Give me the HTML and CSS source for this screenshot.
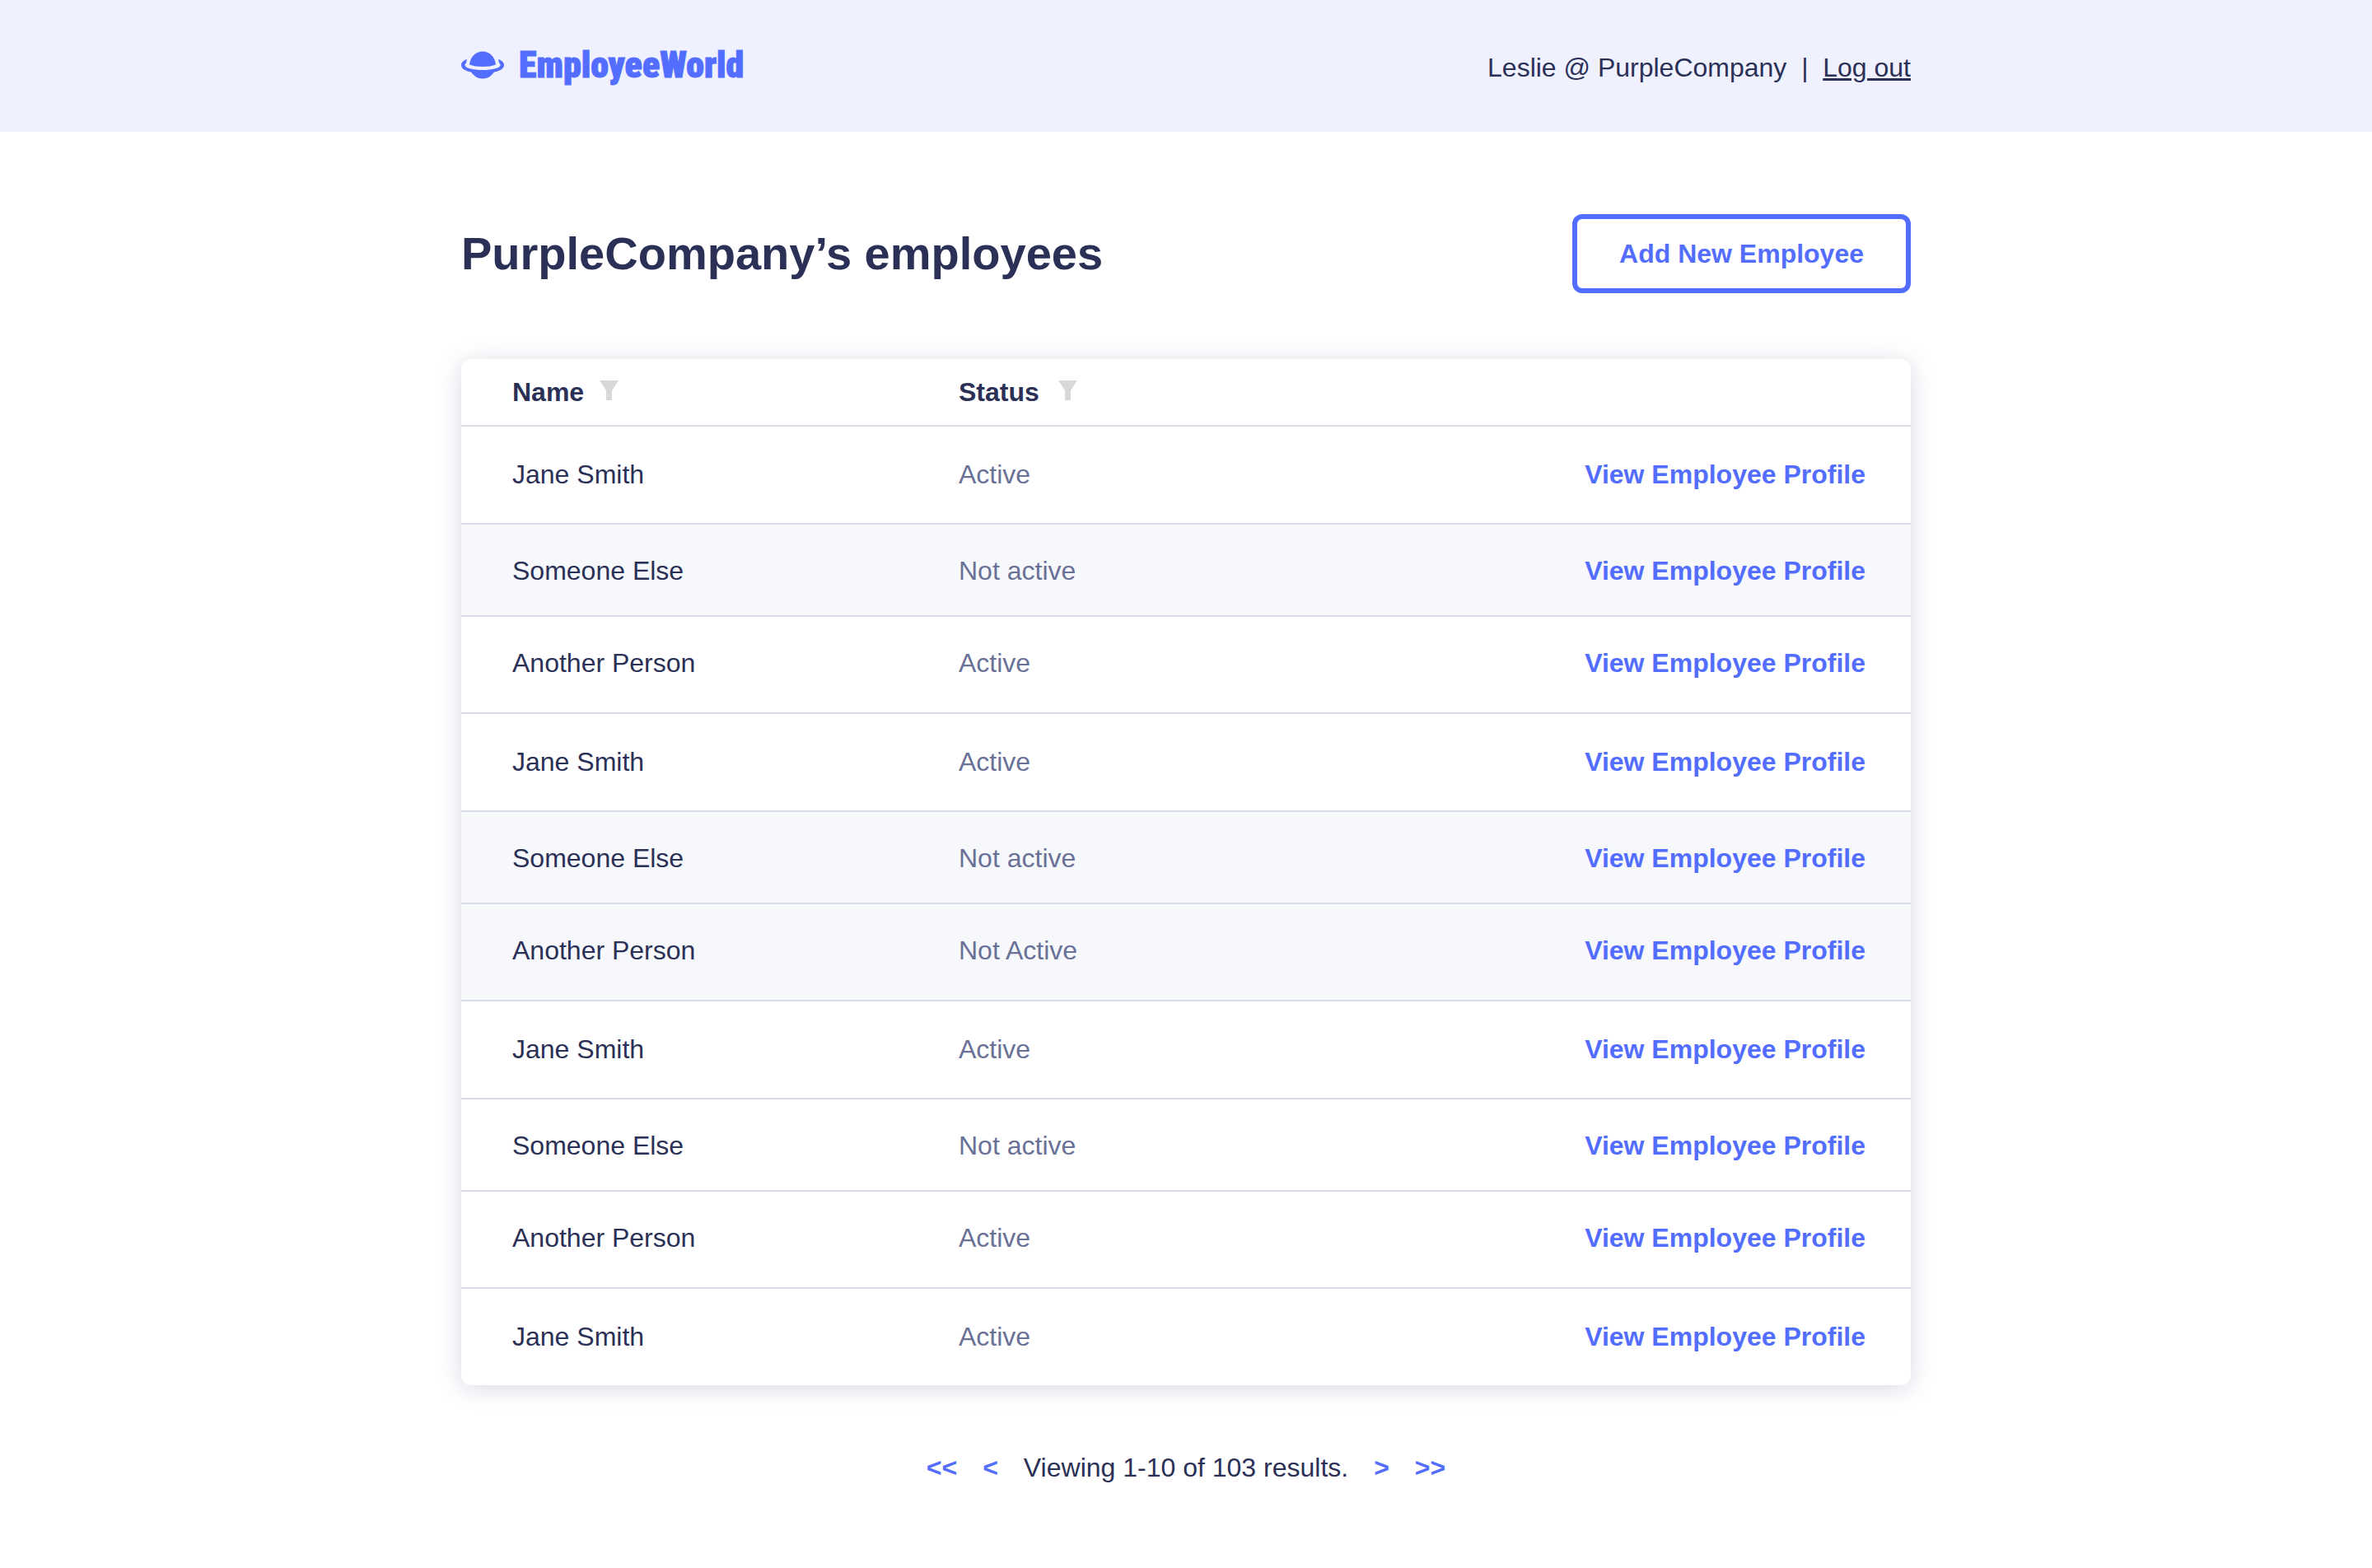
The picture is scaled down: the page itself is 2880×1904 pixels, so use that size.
FILE: index.html
```html
<!DOCTYPE html>
<html lang="en">
<head>
  <meta charset="utf-8">
  <meta name="viewport" content="width=device-width, initial-scale=1">
  <title>EmployeeWorld – Employees</title>
  <link rel="stylesheet" href="styles.css">
</head>
<body>
  <header class="site-header">
    <div class="container site-header-inner">
      <a class="logo" href="#">
        <svg class="logo-icon" viewBox="0 0 52 34" aria-hidden="true">
          <path d="M10 16.500C11 7 17.500 0.500 26 0.500S41 7 42 16.500C38 18.200 32 19 26 19S14 18.200 10 16.500Z"/>
          <path d="M7 10C2.500 11.500 0 14 0 17C0 21.500 5 24 12 25.500C15.500 30.500 20 33.500 26 33.500S36.500 30.500 40 25.500C47 24 52 21.500 52 17C52 14 49.500 11.500 45 10L46 14.500C47 15.300 47.500 16 47.500 17C47.500 20.500 38 23 26 23S4.500 20.500 4.500 17C4.500 16 5 15.300 6 14.500Z"/>
        </svg>
        <span>EmployeeWorld</span>
      </a>
      <nav class="account">
        <span>Leslie @ PurpleCompany&nbsp; |&nbsp; </span><a class="logout" href="#">Log out</a>
      </nav>
    </div>
  </header>

  <main class="container content">
    <div class="page-heading">
      <h1 class="page-title">PurpleCompany’s employees</h1>
      <button class="add-button" type="button">Add New Employee</button>
    </div>

    <div class="card">
      <table class="employees">
        <thead>
          <tr>
            <th class="name-column" scope="col">
              <span class="column-label">Name
                <button class="filter" type="button" aria-label="Filter by name"><svg class="filter-icon" viewBox="0 0 23 24" aria-hidden="true"><path d="M0 0H23L15 12V24H8V12Z"/></svg></button>
              </span>
            </th>
            <th class="status-column" scope="col">
              <span class="column-label">Status
                <button class="filter" type="button" aria-label="Filter by status"><svg class="filter-icon" viewBox="0 0 23 24" aria-hidden="true"><path d="M0 0H23L15 12V24H8V12Z"/></svg></button>
              </span>
            </th>
            <th></th>
          </tr>
        </thead>
        <tbody>
          <tr class="row-tall"><td>Jane Smith</td><td class="status">Active</td><td class="action"><a class="profile-link" href="#">View Employee Profile</a></td></tr>
          <tr class="row-short inactive"><td>Someone Else</td><td class="status">Not active</td><td class="action"><a class="profile-link" href="#">View Employee Profile</a></td></tr>
          <tr class="row-medium"><td>Another Person</td><td class="status">Active</td><td class="action"><a class="profile-link" href="#">View Employee Profile</a></td></tr>
          <tr class="row-tall"><td>Jane Smith</td><td class="status">Active</td><td class="action"><a class="profile-link" href="#">View Employee Profile</a></td></tr>
          <tr class="row-short inactive"><td>Someone Else</td><td class="status">Not active</td><td class="action"><a class="profile-link" href="#">View Employee Profile</a></td></tr>
          <tr class="row-medium inactive"><td>Another Person</td><td class="status">Not Active</td><td class="action"><a class="profile-link" href="#">View Employee Profile</a></td></tr>
          <tr class="row-tall"><td>Jane Smith</td><td class="status">Active</td><td class="action"><a class="profile-link" href="#">View Employee Profile</a></td></tr>
          <tr class="row-short"><td>Someone Else</td><td class="status">Not active</td><td class="action"><a class="profile-link" href="#">View Employee Profile</a></td></tr>
          <tr class="row-medium"><td>Another Person</td><td class="status">Active</td><td class="action"><a class="profile-link" href="#">View Employee Profile</a></td></tr>
          <tr class="row-tall"><td>Jane Smith</td><td class="status">Active</td><td class="action"><a class="profile-link" href="#">View Employee Profile</a></td></tr>
        </tbody>
      </table>
    </div>

    <nav class="pagination" aria-label="Pagination">
      <a class="page-link" href="#" aria-label="First page">&lt;&lt;</a>
      <a class="page-link" href="#" aria-label="Previous page">&lt;</a>
      <span>Viewing 1-10 of 103 results.</span>
      <a class="page-link" href="#" aria-label="Next page">&gt;</a>
      <a class="page-link" href="#" aria-label="Last page">&gt;&gt;</a>
    </nav>
  </main>
</body>
</html>
```
FILE: styles.css
```css
:root {
  --ink: #2b3056;
  --muted: #6a7197;
  --accent: #536dfe;
  --line: #dadce8;
}

* {
  box-sizing: border-box;
}

body {
  margin: 0;
  background: #fff;
  color: var(--ink);
  font: 32px/40px "Liberation Sans", Arial, sans-serif;
}

a {
  color: inherit;
  text-decoration: none;
}

button {
  font: inherit;
  color: inherit;
  cursor: pointer;
}

.container {
  width: 100%;
  max-width: 1760px;
  margin: 0 auto;
}

/* Header */
.site-header {
  background: #f0f1ff;
}

.site-header-inner {
  display: flex;
  align-items: flex-start;
  justify-content: space-between;
  padding: 56px 0 58px;
}

.logo {
  display: flex;
  align-items: center;
  gap: 18px;
  color: var(--accent);
  font: 900 44px/46px "Roboto Condensed", "Arial Narrow", sans-serif;
  -webkit-text-stroke: 1px var(--accent);
}

.logo-icon {
  width: 52px;
  height: 34px;
  fill: currentColor;
}

.account {
  padding-top: 6px;
  white-space: nowrap;
}

.logout {
  text-decoration: underline;
  text-decoration-thickness: 3px;
}

/* Page heading */
.content {
  padding: 100px 0;
}

.page-heading {
  display: flex;
  align-items: center;
  justify-content: space-between;
}

.page-title {
  margin: 0;
  font-size: 56px;
  line-height: 64px;
}

.add-button {
  padding: 22px 51px;
  border: 6px solid var(--accent);
  border-radius: 12px;
  background: #fff;
  color: var(--accent);
  font-weight: bold;
}

/* Employee table */
.card {
  margin-top: 80px;
  overflow: hidden;
  border-radius: 12px;
  box-shadow: 0 4px 28px rgba(60, 68, 130, 0.2);
}

.employees {
  width: 100%;
  border-spacing: 0;
  table-layout: fixed;
}

.employees th,
.employees td {
  padding: 0;
  border-bottom: 2px solid var(--line);
  text-align: left;
}

.employees th {
  padding: 20px 0;
}

.employees th:first-child,
.employees td:first-child {
  padding-left: 62px;
}

.name-column {
  width: 604px;
}

.column-label {
  display: flex;
  align-items: center;
  gap: 19px;
}

.status-column .column-label {
  gap: 23px;
}

.filter {
  display: flex;
  padding: 0 0 4px;
  border: 0;
  background: none;
}

.filter-icon {
  width: 23px;
  height: 24px;
  fill: #d8d8d8;
}

.employees .row-tall td {
  padding-top: 38px;
  padding-bottom: 39px;
}

.employees .row-short td {
  padding-top: 36px;
  padding-bottom: 34px;
}

.employees .row-medium td {
  padding-top: 36px;
  padding-bottom: 40px;
}

.employees tbody tr:last-child td {
  border-bottom: 0;
}

.inactive {
  background: #f6f8fc;
}

.status {
  color: var(--muted);
}

.employees .action {
  padding-right: 55px;
  text-align: right;
}

.profile-link,
.page-link {
  color: var(--accent);
  font-weight: bold;
}

/* Pagination */
.pagination {
  display: flex;
  justify-content: center;
  gap: 31px;
  margin-top: 80px;
}
```
